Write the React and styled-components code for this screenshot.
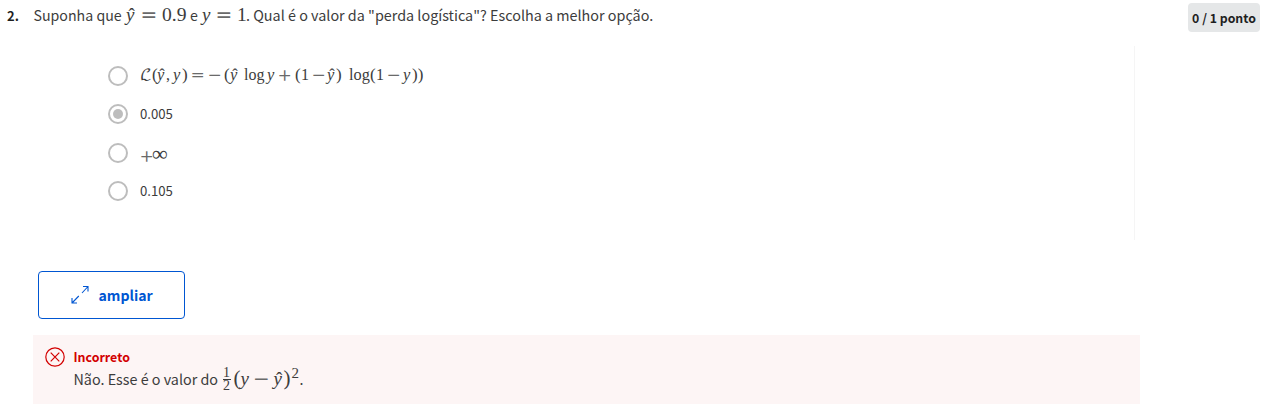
import React from 'react';
import styled, { createGlobalStyle } from 'styled-components';

const Global = createGlobalStyle`
  * { box-sizing: border-box; }
  body { margin: 0; background: #fff; color: #3c3c3c; font-family: "Noto Sans CJK SC", "Noto Sans", sans-serif; }
`;
const Page = styled.main`width: 1264px; height: 408px; overflow: hidden; display: flex; flex-direction: column;`;
const Header = styled.header`display: flex; justify-content: space-between; height: 46px; padding: 0 4px 0 7px;`;
const Line = styled.div`display: flex; align-items: baseline; white-space: pre; height: ${p => p.$h}px; line-height: ${p => p.$lh || p.$h}px;`;
const Run = styled.span`
  flex: none; width: ${p => p.$w}px; font-size: ${p => p.$size || 14.2}px;
  font-weight: ${p => (p.$bold ? 700 : 400)};
  color: ${p => p.$color || 'inherit'};
`;
const Value = styled(Run)`height: 20px; line-height: 20px;`;
const Sym = styled.span`
  flex: none; position: relative; width: ${p => p.$w}px; font-size: ${p => p.$size || 19}px;
  font-family: "Liberation Serif", serif;
  font-style: ${p => (p.$it ? 'italic' : 'normal')};
`;
const MathSym = styled(Sym)`font-family: "DejaVu Math TeX Gyre", "Liberation Serif", serif; line-height: 0;`;
const Op = styled(MathSym)`color: #6a6a6a;`;
const HatMark = styled.span`position: absolute; left: ${p => p.$size * 0.13}px; top: 0; font-style: normal;`;
const Hat = ({ w, size = 19 }) => <Sym $w={w} $size={size} $it>y<HatMark $size={size}>ˆ</HatMark></Sym>;
const Badge = styled.div`
  width: 72px; height: 29px; margin-top: 3px; border-radius: 4px; background: #e5e7e8; color: #1f1f1f;
  font-size: 12.3px; font-weight: 700; line-height: 30px; text-align: center; white-space: nowrap;
`;
const Options = styled.section`width: 1135px; height: 194px; padding: 11px 0 0 108px; border-right: 1px solid #f5f5f5;`;
const Option = styled.label`display: flex; align-items: center; height: ${p => p.$h || 38}px;`;
const Radio = styled.span`
  width: 20px; height: 20px; margin-right: 12px; border: 2px solid #bdbdbd; border-radius: 50%;
  display: flex; align-items: center; justify-content: center; flex: none;
  &::after { content: ""; width: 10px; height: 10px; border-radius: 50%; background: ${p => (p.$on ? '#bdbdbd' : 'transparent')}; }
`;
const Expand = styled.button`
  display: flex; align-items: center; width: 147px; height: 48px; margin: 31px 0 0 38px; padding: 0 0 0 32px;
  background: #fff; border: 1px solid #0056d2; border-radius: 4px; color: #0056d2; font: 700 14.1px "Noto Sans CJK SC", sans-serif;
  svg { margin-right: 8.5px; }
`;
const Feedback = styled.section`
  display: flex; width: 1107px; height: 69px; margin: 16px 0 0 33px; padding: 12px 0 0 12px; background: #fdf5f5;
  > svg { flex: none; margin-right: 8.5px; }
`;
const Title = styled.div`height: 20px; line-height: 20px; font-size: 12.4px; font-weight: 700; color: #d30001;`;
const Fraction = styled.span`
  display: flex; flex-direction: column; align-self: center; width: 8px; margin: 2px 3px 0 0; text-align: center;
  font: 14px/12px "Liberation Serif", serif;
  span + span { border-top: 1px solid currentColor; }
`;
const Sup = styled.span`position: relative; top: -7px; width: 8px; font: 15px/1 "Liberation Serif", serif;`;

export default function App() {
  return (
    <Page>
      <Global />
      <Header>
        <Line $h={30}>
          <Run $w={26.5} $bold $color="#1f1f1f" $size={13}>2.</Run>
          <Run $w={92.5}>Suponha que</Run>
          <Hat w={15} />
          <Op $w={21} $size={20}>=</Op>
          <Sym $w={28} $size={19.6}>0.9</Sym>
          <Run $w={12}>e</Run>
          <Sym $w={14} $it>y</Sym>
          <Op $w={21} $size={20}>=</Op>
          <Sym $w={9} $size={19.6}>1</Sym>
          <Run $w={408} $size={14.36}>. Qual é o valor da "perda logística"? Escolha a melhor opção.</Run>
        </Line>
        <Badge>0 / 1 ponto</Badge>
      </Header>
      <Options>
        <Option>
          <Radio />
          <Line $h={22} $lh={20}>
            <MathSym $w={12} $size={15.5}>ℒ</MathSym>
            <Sym $w={5} $size={17}>(</Sym>
            <Hat w={9} size={16.5} />
            <Sym $w={7} $size={16}>,</Sym>
            <Sym $w={9} $size={16.5} $it>y</Sym>
            <Sym $w={9} $size={17}>)</Sym>
            <Op $w={17} $size={17}>=</Op>
            <Op $w={16} $size={17}>−</Op>
            <Sym $w={6} $size={17}>(</Sym>
            <Hat w={14} size={16.5} />
            <Sym $w={23} $size={16}>log</Sym>
            <Sym $w={11} $size={16.5} $it>y</Sym>
            <Op $w={17} $size={17}>+</Op>
            <Sym $w={6} $size={17}>(</Sym>
            <Sym $w={11} $size={16}>1</Sym>
            <Op $w={15} $size={17}>−</Op>
            <Hat w={9} size={16.5} />
            <Sym $w={13} $size={17}>)</Sym>
            <Sym $w={21} $size={16.3}>log</Sym>
            <Sym $w={6} $size={17}>(</Sym>
            <Sym $w={11} $size={16}>1</Sym>
            <Op $w={16} $size={17}>−</Op>
            <Sym $w={9} $size={16.5} $it>y</Sym>
            <Sym $w={14} $size={17}>))</Sym>
          </Line>
        </Option>
        <Option><Radio $on /><Value $w={40} $size={13.2}>0.005</Value></Option>
        <Option $h={39}>
          <Radio />
          <Line $h={20} $lh={22}><Op $w={12} $size={17}>+</Op><Sym $w={16} $size={22}>∞</Sym></Line>
        </Option>
        <Option><Radio /><Value $w={40} $size={13.2}>0.105</Value></Option>
      </Options>
      <Expand>
        <svg width="19" height="20" viewBox="0 0 19 20" fill="none" stroke="currentColor" strokeWidth="1.1">
          <path d="M12 1.5h5V6.5M17 1.5l-6 6.5M6 18H1V13M1 18l6.8-7" />
        </svg>
        ampliar
      </Expand>
      <Feedback>
        <svg width="20" height="20" viewBox="0 0 20 20" fill="none" stroke="#d30001" strokeWidth="1.2">
          <circle cx="10" cy="10" r="9.2" /><path d="M5.7 5.7l8.6 8.6M14.3 5.7l-8.6 8.6" />
        </svg>
        <div>
          <Title>Incorreto</Title>
          <Line $h={22}>
            <Run $w={149} $size={14.34}>Não. Esse é o valor do</Run>
            <Fraction><span>1</span><span>2</span></Fraction>
            <Sym $w={7} $size={21}>(</Sym>
            <Sym $w={13} $it>y</Sym>
            <Op $w={20} $size={20}>−</Op>
            <Hat w={10} />
            <Sym $w={8} $size={21}>)</Sym>
            <Sup>2</Sup>
            <Run $w={6}>.</Run>
          </Line>
        </div>
      </Feedback>
    </Page>
  );
}
